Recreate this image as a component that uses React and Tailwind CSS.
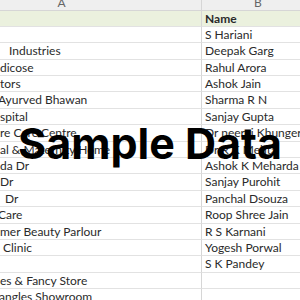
import React from 'react'

// visible part of column A, its left nudge, and the name in column B
const ROWS = [
  { a: '', ax: 'pl-[78px]', b: 'S Hariani' },
  { a: 'Industries', ax: 'pl-[87px]', b: 'Deepak Garg' },
  { a: 'dicose', ax: 'pl-[78px]', b: 'Rahul Arora' },
  { a: 'tors', ax: 'pl-[78px]', b: 'Ashok Jain' },
  { a: 'Ayurved Bhawan', ax: 'pl-[76px]', b: 'Sharma R N' },
  { a: 'spital', ax: 'pl-[78px]', b: 'Sanjay Gupta' },
  { a: 're Care Centre', ax: 'pl-[78px]', b: 'Dr neeraj Khunger' },
  { a: 'al & Maternity Home', ax: 'pl-[78px]', b: 'Dr R K Mehta' },
  { a: 'da Dr', ax: 'pl-[78px]', b: 'Ashok K Meharda' },
  { a: 'Dr', ax: 'pl-[78px]', b: 'Sanjay Purohit' },
  { a: 'Dr', ax: 'pl-[83px]', b: 'Panchal Dsouza' },
  { a: 'Care', ax: 'pl-[76px]', b: 'Roop Shree Jain' },
  { a: 'mer Beauty Parlour', ax: 'pl-[78px]', b: 'R S Karnani' },
  { a: 'Clinic', ax: 'pl-[81px]', b: 'Yogesh Porwal' },
  { a: '', ax: 'pl-[78px]', b: 'S K Pandey' },
  { a: 'es & Fancy Store', ax: 'pl-[78px]', b: '' },
  { a: 'angles Showroom', ax: 'pl-[77px]', b: '' },
]

const cell = 'h-[16.4px] border-b border-[#e2e2e2] whitespace-nowrap overflow-hidden leading-[16px] text-[12px]'

export default function App() {
  return (
    <div className="relative w-[300px] h-[300px] overflow-hidden bg-white text-[#2a2a2a]"
      style={{ fontFamily: 'Lato, "Open Sans", sans-serif' }}>
      <div className="-ml-[78px] grid grid-cols-[280px_112px]">
        {/* column letters */}
        <div className="-mt-[5.5px] h-[16px] bg-[#efefef] border-r border-b border-[#d6d6d6] text-center text-[#666] text-[12px] leading-[16px]">A</div>
        <div className="-mt-[5.5px] h-[16px] bg-[#efefef] border-b border-[#d6d6d6] text-center text-[#666] text-[12px] leading-[16px]">B</div>

        {/* header row */}
        <div className={cell + ' bg-[#ebf1de] border-r border-r-[#d6d6d6]'} />
        <div className={cell + ' bg-[#ebf1de] pl-[3px] font-bold'}>Name</div>

        {ROWS.map((r, i) => (
          <React.Fragment key={i}>
            <div className={cell + ' border-r border-r-[#d6d6d6] ' + r.ax}>{r.a}</div>
            <div className={cell + ' pl-[3px]'}>{r.b}</div>
          </React.Fragment>
        ))}
      </div>

      <div className="absolute inset-x-0 top-[118px] text-center text-black font-bold text-[43px] leading-[50px]"
        style={{ fontFamily: 'Inter, sans-serif' }}>
        Sample Data
      </div>
    </div>
  )
}
